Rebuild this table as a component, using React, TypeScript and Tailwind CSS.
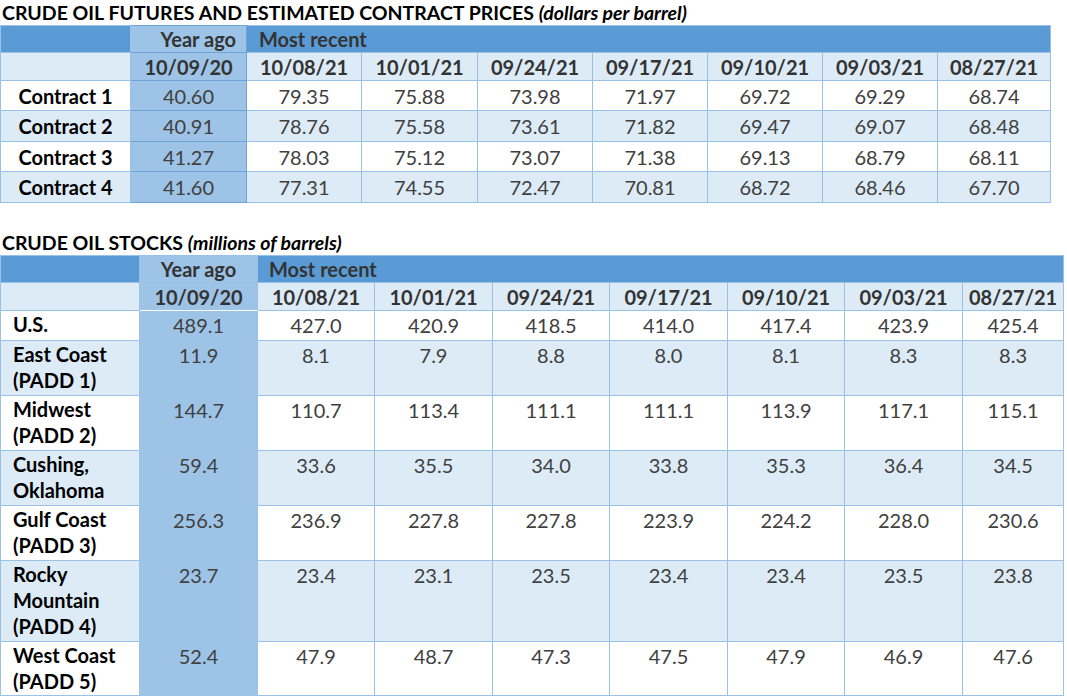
const futuresDates = ["10/08/21", "10/01/21", "09/24/21", "09/17/21", "09/10/21", "09/03/21", "08/27/21"];

const futures = [
  { label: "Contract 1", ago: "40.60", vals: ["79.35", "75.88", "73.98", "71.97", "69.72", "69.29", "68.74"], h: "h-[30px]" },
  { label: "Contract 2", ago: "40.91", vals: ["78.76", "75.58", "73.61", "71.82", "69.47", "69.07", "68.48"], h: "h-[31px]" },
  { label: "Contract 3", ago: "41.27", vals: ["78.03", "75.12", "73.07", "71.38", "69.13", "68.79", "68.11"], h: "h-[30px]" },
  { label: "Contract 4", ago: "41.60", vals: ["77.31", "74.55", "72.47", "70.81", "68.72", "68.46", "67.70"], h: "h-[31px]" },
];

const stocks = [
  { label: ["U.S."], ago: "489.1", vals: ["427.0", "420.9", "418.5", "414.0", "417.4", "423.9", "425.4"], h: "h-[30px]" },
  { label: ["East Coast", "(PADD 1)"], ago: "11.9", vals: ["8.1", "7.9", "8.8", "8.0", "8.1", "8.3", "8.3"], h: "h-[55px]" },
  { label: ["Midwest", "(PADD 2)"], ago: "144.7", vals: ["110.7", "113.4", "111.1", "111.1", "113.9", "117.1", "115.1"], h: "h-[55px]" },
  { label: ["Cushing,", "Oklahoma"], ago: "59.4", vals: ["33.6", "35.5", "34.0", "33.8", "35.3", "36.4", "34.5"], h: "h-[55px]" },
  { label: ["Gulf Coast", "(PADD 3)"], ago: "256.3", vals: ["236.9", "227.8", "227.8", "223.9", "224.2", "228.0", "230.6"], h: "h-[55px]" },
  { label: ["Rocky", "Mountain", "(PADD 4)"], ago: "23.7", vals: ["23.4", "23.1", "23.5", "23.4", "23.4", "23.5", "23.8"], h: "h-[81px]" },
  { label: ["West Coast", "(PADD 5)"], ago: "52.4", vals: ["47.9", "48.7", "47.3", "47.5", "47.9", "46.9", "47.6"], h: "h-[54px]" },
];

const Title = ({ main, sub }: { main: string; sub: string }) => (
  <h2 className="pl-[2px] text-[19.5px] leading-[25px] font-bold text-black">
    {main} <span className="italic">{sub}</span>
  </h2>
);

const FuturesTable = () => (
  <table className="w-[1050px] table-fixed border-collapse text-[20px] leading-[26px]">
    <colgroup>
      <col className="w-[130px]" />
      <col className="w-[116px]" />
      <col className="w-[115px]" />
      <col className="w-[116px]" />
      <col className="w-[115px]" />
      <col className="w-[115px]" />
      <col className="w-[115px]" />
      <col className="w-[115px]" />
      <col className="w-[113px]" />
    </colgroup>
    <thead>
      <tr className="h-[27px]">
        <th className="border border-[#9bc2e6] bg-[#5b9bd5]"></th>
        <th className="border border-[#6fa3d6] bg-[#9dc3e6] pr-[10px] text-right font-bold text-[#333]">
          Year ago
        </th>
        <th
          colSpan={7}
          className="border border-[#9bc2e6] bg-[#5b9bd5] pl-[12px] text-left font-bold text-[#333]"
        >
          Most recent
        </th>
      </tr>
      <tr className="h-[28px]">
        <th className="border border-[#9bc2e6] bg-[#ddebf7]"></th>
        <th className="border border-[#6fa3d6] bg-[#9dc3e6] text-center font-bold text-[#333]">10/09/20</th>
        {futuresDates.map((d) => (
          <th key={d} className="border border-[#9bc2e6] bg-[#ddebf7] text-center font-bold text-[#333]">
            {d}
          </th>
        ))}
      </tr>
    </thead>
    <tbody>
      {futures.map((row, i) => (
        <tr key={row.label} className={`${row.h} ${i % 2 === 0 ? "bg-white" : "bg-[#ddebf7]"}`}>
          <td className="border border-[#9bc2e6] text-center font-bold text-black">{row.label}</td>
          <td className="border border-[#6fa3d6] bg-[#9dc3e6] text-center text-[#404040]">{row.ago}</td>
          {row.vals.map((v, j) => (
            <td key={j} className="border border-[#9bc2e6] text-center text-[#404040]">
              {v}
            </td>
          ))}
        </tr>
      ))}
    </tbody>
  </table>
);

const StocksTable = () => (
  <table className="w-[1063px] table-fixed border-collapse text-[20px] leading-[26px]">
    <colgroup>
      <col className="w-[139px]" />
      <col className="w-[118px]" />
      <col className="w-[117px]" />
      <col className="w-[118px]" />
      <col className="w-[117px]" />
      <col className="w-[118px]" />
      <col className="w-[117px]" />
      <col className="w-[118px]" />
      <col className="w-[101px]" />
    </colgroup>
    <thead>
      <tr className="h-[27px]">
        <th className="border border-[#9bc2e6] bg-[#5b9bd5]"></th>
        <th className="border-y border-[#9bc2e6] bg-[#9dc3e6] text-center font-bold text-[#333]">Year ago</th>
        <th
          colSpan={7}
          className="border border-[#9bc2e6] bg-[#5b9bd5] pl-[11px] text-left font-bold text-[#333]"
        >
          Most recent
        </th>
      </tr>
      <tr className="h-[28px]">
        <th className="border border-[#9bc2e6] bg-[#ddebf7]"></th>
        <th className="border-y border-b-white border-t-[#9bc2e6] bg-[#9dc3e6] text-center font-bold text-[#333]">
          10/09/20
        </th>
        {futuresDates.map((d) => (
          <th key={d} className="border border-[#9bc2e6] bg-[#ddebf7] text-center font-bold text-[#333]">
            {d}
          </th>
        ))}
      </tr>
    </thead>
    <tbody>
      {stocks.map((row, i) => (
        <tr key={row.label[0]} className={`${row.h} ${i % 2 === 0 ? "bg-white" : "bg-[#ddebf7]"}`}>
          <td className="border border-[#9bc2e6] pl-[12px] align-top font-bold text-black">
            {row.label.map((l) => (
              <div key={l}>{l}</div>
            ))}
          </td>
          <td className="bg-[#9dc3e6] pt-[1px] align-top text-center text-[#404040]">{row.ago}</td>
          {row.vals.map((v, j) => (
            <td key={j} className="border border-[#9bc2e6] pt-[1px] align-top text-center text-[#404040]">
              {v}
            </td>
          ))}
        </tr>
      ))}
    </tbody>
  </table>
);

const App = () => {
  return (
    <div className="h-[700px] w-[1067px] overflow-hidden bg-white font-['Lato','Liberation_Sans',sans-serif]">
      <Title main="CRUDE OIL FUTURES AND ESTIMATED CONTRACT PRICES" sub="(dollars per barrel)" />
      <FuturesTable />
      <div className="h-[27px]" />
      <Title main="CRUDE OIL STOCKS" sub="(millions of barrels)" />
      <StocksTable />
    </div>
  );
};

export default App;
